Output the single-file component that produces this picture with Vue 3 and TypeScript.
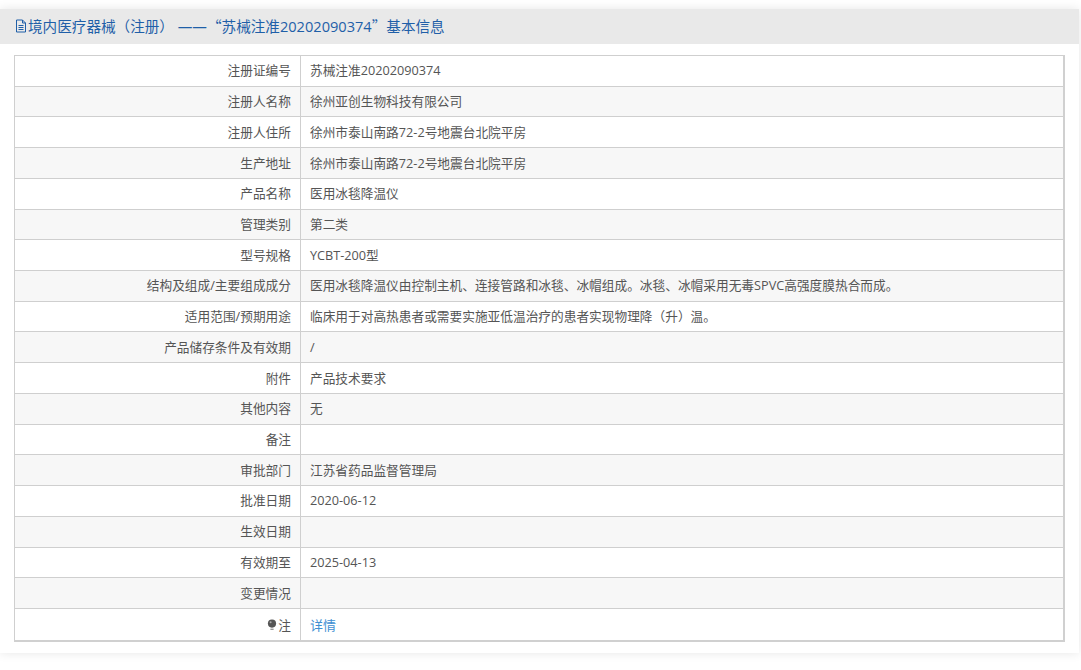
<script setup lang="ts">
interface Row { label: string; value: string; note?: boolean; link?: boolean }
const rows: Row[] = [
  { label: '注册证编号', value: '苏械注准20202090374' },
  { label: '注册人名称', value: '徐州亚创生物科技有限公司' },
  { label: '注册人住所', value: '徐州市泰山南路72-2号地震台北院平房' },
  { label: '生产地址', value: '徐州市泰山南路72-2号地震台北院平房' },
  { label: '产品名称', value: '医用冰毯降温仪' },
  { label: '管理类别', value: '第二类' },
  { label: '型号规格', value: 'YCBT-200型' },
  { label: '结构及组成/主要组成成分', value: '医用冰毯降温仪由控制主机、连接管路和冰毯、冰帽组成。冰毯、冰帽采用无毒SPVC高强度膜热合而成。' },
  { label: '适用范围/预期用途', value: '临床用于对高热患者或需要实施亚低温治疗的患者实现物理降（升）温。' },
  { label: '产品储存条件及有效期', value: '/' },
  { label: '附件', value: '产品技术要求' },
  { label: '其他内容', value: '无' },
  { label: '备注', value: '' },
  { label: '审批部门', value: '江苏省药品监督管理局' },
  { label: '批准日期', value: '2020-06-12' },
  { label: '生效日期', value: '' },
  { label: '有效期至', value: '2025-04-13' },
  { label: '变更情况', value: '' },
  { label: '注', value: '详情', note: true, link: true },
]
</script>

<template>
  <div class="page">
    <section class="panel">
      <header class="head">
        <svg class="doc" viewBox="0 0 12 14" width="12" height="14" aria-hidden="true">
          <path d="M1.5 1h6l3 3v9h-9z M7.5 1v3h3 M3.5 6.5h5 M3.5 8.5h5 M3.5 10.5h5" fill="none" stroke="#1f5fa8" stroke-width="1" />
        </svg>
        <span>境内医疗器械（注册） ——<span class="cjk">“</span>苏械注准20202090374<span class="cjk">”</span>基本信息</span>
      </header>
      <div class="body">
        <table class="info">
          <tbody>
            <tr v-for="r in rows" :key="r.label" :class="{ tall: r.note }">
              <td class="label">
                <svg v-if="r.note" class="bulb" viewBox="0 0 10 12" width="10" height="12" aria-hidden="true">
                  <circle cx="5" cy="4.6" r="4.1" fill="#555" />
                  <circle cx="3.6" cy="3.2" r="1" fill="#aaa" />
                  <rect x="3.4" y="9.6" width="3.2" height="1.4" fill="#999" />
                </svg>{{ r.label }}
              </td>
              <td class="value"><a v-if="r.link" class="link">{{ r.value }}</a><template v-else>{{ r.value }}</template></td>
            </tr>
          </tbody>
        </table>
      </div>
    </section>
  </div>
</template>

<style>
html, body { margin: 0; background: #fff; }
</style>

<style scoped>
.page {
  width: 1081px;
  height: 670px;
  padding: 9px 2px 0 0;
  box-sizing: border-box;
  overflow: hidden;
  font-family: "Open Sans", "Noto Sans CJK SC", sans-serif;
  font-size: 12.7px;
  color: #555;
}
.panel {
  height: 644px;
  background: #fff;
  box-shadow: 0 0 10px rgba(0, 0, 0, 0.1);
}
.head {
  height: 35px;
  background: #e9e9e9;
  display: flex;
  align-items: center;
  padding: 0 0 2px 15px;
  box-sizing: border-box;
  font-size: 14.6px;
  color: #1f5fa8;
  white-space: pre;
}
.cjk { font-family: "Noto Sans CJK SC", sans-serif; }
.doc { margin-right: 1px; flex: none; }
.body { padding: 11px 14px 0; }
.info {
  width: 1051px;
  border-collapse: collapse;
  table-layout: fixed;
  border-style: solid;
  border-color: #d0d0d0;
  border-width: 1px 2px 2px 1px;
}
.info tr { height: 30.73px; }
.info tr.tall { height: 33px; }
.info tr:nth-child(even) { background: #f7f7f7; }
.info td {
  border: 1px solid #cfcfcf;
  padding: 0 9px 1px;
  line-height: 20px;
}
.info tr.tall td { padding-bottom: 0; }
.label { width: 286px; box-sizing: border-box; text-align: right; }
.bulb { vertical-align: -1px; margin-right: 1px; }
.link { color: #3f8fd2; font-size: 13px; }
</style>
